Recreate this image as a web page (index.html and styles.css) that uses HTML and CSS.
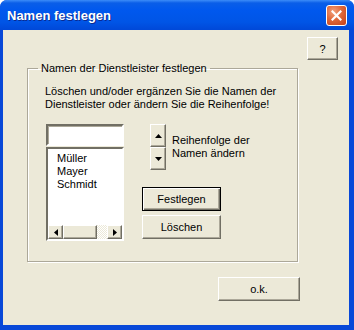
FILE: index.html
```html
<!DOCTYPE html>
<html lang="de">
<head>
    <meta charset="UTF-8">
    <title>Namen festlegen</title>
    <link rel="stylesheet" href="styles.css">
</head>
<body>

<div class="window">
    <div class="titlebar">
        <span class="title">Namen festlegen</span>
        <button class="close-btn" aria-label="Schließen">
            <svg width="11" height="11" viewBox="0 0 11 11">
                <path d="M1.5 1.5 L9.5 9.5 M9.5 1.5 L1.5 9.5" stroke="#fff" stroke-width="2.2" stroke-linecap="square"/>
            </svg>
        </button>
    </div>

    <div class="client">
        <div class="help-row">
            <button class="btn btn-help">?</button>
        </div>

        <fieldset class="group">
            <legend>Namen der Dienstleister festlegen</legend>
            <p class="hint">Löschen und/oder ergänzen Sie die Namen der Dienstleister oder ändern Sie die Reihenfolge!</p>

            <div class="editor">
                <div class="names">
                    <input type="text" class="name-input">
                    <div class="listbox">
                        <ul class="items">
                            <li>Müller</li>
                            <li>Mayer</li>
                            <li>Schmidt</li>
                        </ul>
                        <div class="hscroll">
                            <span class="sb-btn">
                                <svg width="4" height="7" viewBox="0 0 4 7"><path d="M4 0 L0 3.5 L4 7 Z" fill="#000"/></svg>
                            </span>
                            <span class="sb-thumb"></span>
                            <span class="sb-track"></span>
                            <span class="sb-btn">
                                <svg width="4" height="7" viewBox="0 0 4 7"><path d="M0 0 L4 3.5 L0 7 Z" fill="#000"/></svg>
                            </span>
                        </div>
                    </div>
                </div>

                <div class="actions">
                    <div class="order">
                        <div class="spin">
                            <button class="spin-btn">
                                <svg width="7" height="4" viewBox="0 0 7 4"><path d="M0 4 L3.5 0 L7 4 Z" fill="#000"/></svg>
                            </button>
                            <button class="spin-btn">
                                <svg width="7" height="4" viewBox="0 0 7 4"><path d="M0 0 L3.5 4 L7 0 Z" fill="#000"/></svg>
                            </button>
                        </div>
                        <span class="order-label">Reihenfolge der<br>Namen ändern</span>
                    </div>
                    <button class="btn btn-default">Festlegen</button>
                    <button class="btn btn-delete">Löschen</button>
                </div>
            </div>
        </fieldset>

        <div class="ok-row">
            <button class="btn btn-ok">o.k.</button>
        </div>
    </div>
</div>

</body>
</html>
```

FILE: styles.css
```css
body {
    margin: 0;
    font-family: "Liberation Sans", Arial, sans-serif;
    font-size: 11px;
}

.window {
    width: 354px;
    height: 330px;
    box-sizing: border-box;
    background: #0848d8;
    border-radius: 7px 7px 0 0;
    display: flex;
    flex-direction: column;
    overflow: hidden;
}

.titlebar {
    height: 30px;
    flex: none;
    display: flex;
    align-items: center;
    justify-content: space-between;
    padding: 0 7px 0 7px;
    background: linear-gradient(#3c8cf8 0, #0a5ee8 3px, #0058ee 10px, #0055e6 22px, #0048d8 30px);
}

.title {
    color: #fff;
    font-weight: bold;
    font-size: 13px;
    text-shadow: 1px 1px #0a2a90;
    padding-top: 1px;
}

.close-btn {
    width: 21px;
    height: 21px;
    padding: 0;
    border: 1px solid #fff;
    border-radius: 3px;
    background: radial-gradient(circle at 35% 30%, #f2a27e 0, #e0683a 45%, #c4401a 100%);
    display: flex;
    align-items: center;
    justify-content: center;
    margin-top: 1px;
}

.client {
    flex: 1;
    margin: 0 5px 5px 3px;
    background: #ece9d8;
    display: flex;
    flex-direction: column;
}

.btn {
    font-family: inherit;
    font-size: 11px;
    color: #000;
    background: #ece9d8;
    border: 1px solid;
    border-color: #fff #716f64 #716f64 #fff;
    box-shadow: inset -1px -1px #aca899;
    padding: 0;
}

.help-row {
    display: flex;
    justify-content: flex-end;
    padding: 7px 11px 0 0;
}

.btn-help {
    width: 31px;
    height: 23px;
}

.group {
    margin: 2px 0 0 24px;
    width: 271px;
    box-sizing: border-box;
    border: 1px solid #aca899;
    box-shadow: inset 1px 1px #fff, 1px 1px #fff;
    padding: 0 0 20px 17px;
}

.group legend {
    padding: 0 3px;
    margin-left: -7px;
    line-height: 13px;
}

.hint {
    margin: 10px 0 0 0;
    line-height: 13px;
}

.editor {
    display: flex;
    margin-top: 13px;
}

.names {
    width: 78px;
    margin-left: 1px;
    display: flex;
    flex-direction: column;
}

.name-input {
    height: 22px;
    box-sizing: border-box;
    border: 2px solid;
    border-color: #716f64 #fff #fff #716f64;
    box-shadow: inset 1px 1px #aca899;
    margin: 0;
    padding: 0 3px;
    font: inherit;
    width: 100%;
}

.listbox {
    margin-top: 1px;
    height: 94px;
    box-sizing: border-box;
    border: 2px solid;
    border-color: #716f64 #fff #fff #716f64;
    background: #fff;
    display: flex;
    flex-direction: column;
}

.items {
    list-style: none;
    margin: 0;
    padding: 3px 0 0 9px;
    flex: 1;
    line-height: 13px;
}

.hscroll {
    height: 14px;
    display: flex;
    background: #f4f3ee;
}

.sb-btn,
.sb-thumb {
    box-sizing: border-box;
    background: #ece9d8;
    border: 1px solid;
    border-color: #fff #716f64 #716f64 #fff;
    box-shadow: inset -1px -1px #aca899;
}

.sb-btn {
    width: 15px;
    display: flex;
    align-items: center;
    justify-content: center;
}

.sb-thumb {
    width: 34px;
}

.sb-track {
    flex: 1;
    background: repeating-conic-gradient(#fff 0 25%, #ece9d8 0 50%) 0 0 / 2px 2px;
}

.actions {
    margin-left: 18px;
    display: flex;
    flex-direction: column;
    align-items: flex-start;
}

.order {
    display: flex;
    align-items: center;
    margin-left: 8px;
}

.spin {
    display: flex;
    flex-direction: column;
}

.spin-btn {
    width: 16px;
    height: 23px;
    padding: 0;
    background: #ece9d8;
    border: 1px solid;
    border-color: #fff #716f64 #716f64 #fff;
    box-shadow: inset -1px -1px #aca899;
    display: flex;
    align-items: center;
    justify-content: center;
}

.order-label {
    margin-left: 6px;
    line-height: 13px;
}

.btn-default {
    margin-top: 17px;
    width: 79px;
    height: 24px;
    border: 1px solid #000;
    box-shadow: inset 1px 1px #fff, inset -1px -1px #716f64, inset -2px -2px #aca899;
}

.btn-delete {
    margin-top: 4px;
    width: 79px;
    height: 24px;
}

.ok-row {
    padding: 15px 0 0 215px;
}

.btn-ok {
    width: 82px;
    height: 24px;
}
```
